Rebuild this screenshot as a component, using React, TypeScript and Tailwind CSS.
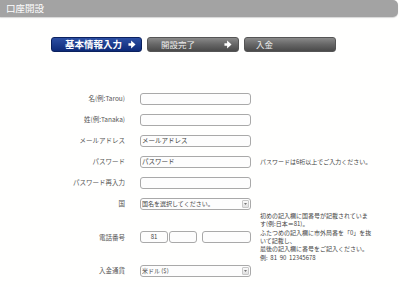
import React from "react";

const font = { fontFamily: '"Noto Sans CJK JP", "Noto Sans", sans-serif' };

function Arrow() {
  return (
    <svg width="8" height="9" viewBox="0 0 9 10" className="shrink-0">
      <path d="M0.5 3.5 H3.5 V0.5 L8.5 5 L3.5 9.5 V6.5 H0.5 Z" fill="#ffffff" />
    </svg>
  );
}

function SelectArrow() {
  return (
    <div className="w-[7px] h-[8px] rounded-[1px] border border-[#c8c8c8] bg-gradient-to-b from-[#fafafa] to-[#e0e0e0] flex items-center justify-center shrink-0">
      <svg width="3" height="2" viewBox="0 0 3 2">
        <path d="M0 0 H3 L1.5 2 Z" fill="#777" />
      </svg>
    </div>
  );
}

function Input({ value }: { value?: string }) {
  return (
    <div className="w-[111px] h-[12px] rounded-[3px] border border-[#a9a9a9] bg-[#fdfdfd] flex items-center pl-[1px] text-[6.5px] leading-none text-[#444] whitespace-nowrap">
      {value}
    </div>
  );
}

function Select({ value }: { value: string }) {
  return (
    <div className="w-[111px] h-[12px] rounded-[3px] border border-[#a9a9a9] bg-[#fdfdfd] flex items-center justify-between pl-[1px] pr-[1px] text-[6px] leading-none text-[#444] whitespace-nowrap">
      <span>{value}</span>
      <SelectArrow />
    </div>
  );
}

function Row({
  label,
  children,
  note,
  h = "h-[21px]",
}: {
  label: string;
  children: React.ReactNode;
  note?: React.ReactNode;
  h?: string;
}) {
  return (
    <div className={`flex items-center ${h}`}>
      <div className="w-[125px] text-right text-[6.5px] leading-none text-[#555] whitespace-nowrap">
        {label}
      </div>
      <div className="ml-[15px] flex items-center">{children}</div>
      {note && <div className="ml-[9px] text-[6px] text-[#444]">{note}</div>}
    </div>
  );
}

export default function App() {
  return (
    <div className="w-[400px] h-[287px] bg-[#fffffe] overflow-hidden" style={font}>
      <div className="h-[17px] w-[398px] bg-[#a3a3a3] rounded-r-[5px] flex items-center pl-[6px] text-[9.5px] leading-none text-white shadow-[0_1px_1px_#d8d8d8]">
        口座開設
      </div>

      <div className="mt-[20px] ml-[51px] flex gap-[5px]">
        <div className="relative w-[91px] h-[15px] rounded-[3px] border border-[#0b215e] bg-gradient-to-b from-[#2d4fa3] to-[#0d2a78] flex items-center pl-[13px]">
          <span className="text-[9.5px] leading-none font-bold text-white">基本情報入力</span>
          <div className="ml-auto mr-[5px]">
            <Arrow />
          </div>
        </div>
        <div className="w-[92px] h-[15px] rounded-[3px] border border-[#555] bg-gradient-to-b from-[#8a8a8a] via-[#666] to-[#4a4a4a] flex items-center pl-[13px]">
          <span className="text-[8.5px] leading-none text-[#eee]">開設完了</span>
          <div className="ml-auto mr-[6px]">
            <Arrow />
          </div>
        </div>
        <div className="w-[92px] h-[15px] rounded-[3px] border border-[#555] bg-gradient-to-b from-[#8a8a8a] via-[#666] to-[#4a4a4a] flex items-center pl-[11px]">
          <span className="text-[8.5px] leading-none text-[#eee]">入金</span>
        </div>
      </div>

      <div className="mt-[36px] flex flex-col">
        <Row label="名(例:Tarou)">
          <Input />
        </Row>
        <Row label="姓(例:Tanaka)">
          <Input />
        </Row>
        <Row label="メールアドレス">
          <Input value="メールアドレス" />
        </Row>
        <Row
          label="パスワード"
          note={<span className="whitespace-nowrap">パスワードは6桁以上でご入力ください。</span>}
        >
          <Input value="パスワード" />
        </Row>
        <Row label="パスワード再入力">
          <Input />
        </Row>
        <Row label="国">
          <Select value="国名を選択してください。" />
        </Row>
        <Row
          label="電話番号"
          h="h-[46px]"
          note={
            <div className="leading-[8.4px] whitespace-nowrap">
              初めの記入欄に国番号が記載されていま
              <br />
              す(例:日本＝81)。
              <br />
              ふたつめの記入欄に市外局番を「0」を抜
              <br />
              いて記載し、
              <br />
              最後の記入欄に番号をご記入ください。
              <br />
              例:&nbsp;&nbsp;81&nbsp;&nbsp;90&nbsp;&nbsp;12345678
            </div>
          }
        >
          <div className="flex items-center">
            <div className="w-[28px] h-[12px] rounded-[3px] border border-[#a9a9a9] bg-[#fdfdfd] flex items-center justify-center text-[6px] leading-none text-[#444]">
              81
            </div>
            <div className="ml-[1px] w-[28px] h-[12px] rounded-[3px] border border-[#a9a9a9] bg-[#fdfdfd]" />
            <div className="ml-[5px] w-[49px] h-[12px] rounded-[3px] border border-[#a9a9a9] bg-[#fdfdfd]" />
          </div>
        </Row>
        <Row label="入金通貨">
          <Select value="米ドル ($)" />
        </Row>
      </div>
    </div>
  );
}
